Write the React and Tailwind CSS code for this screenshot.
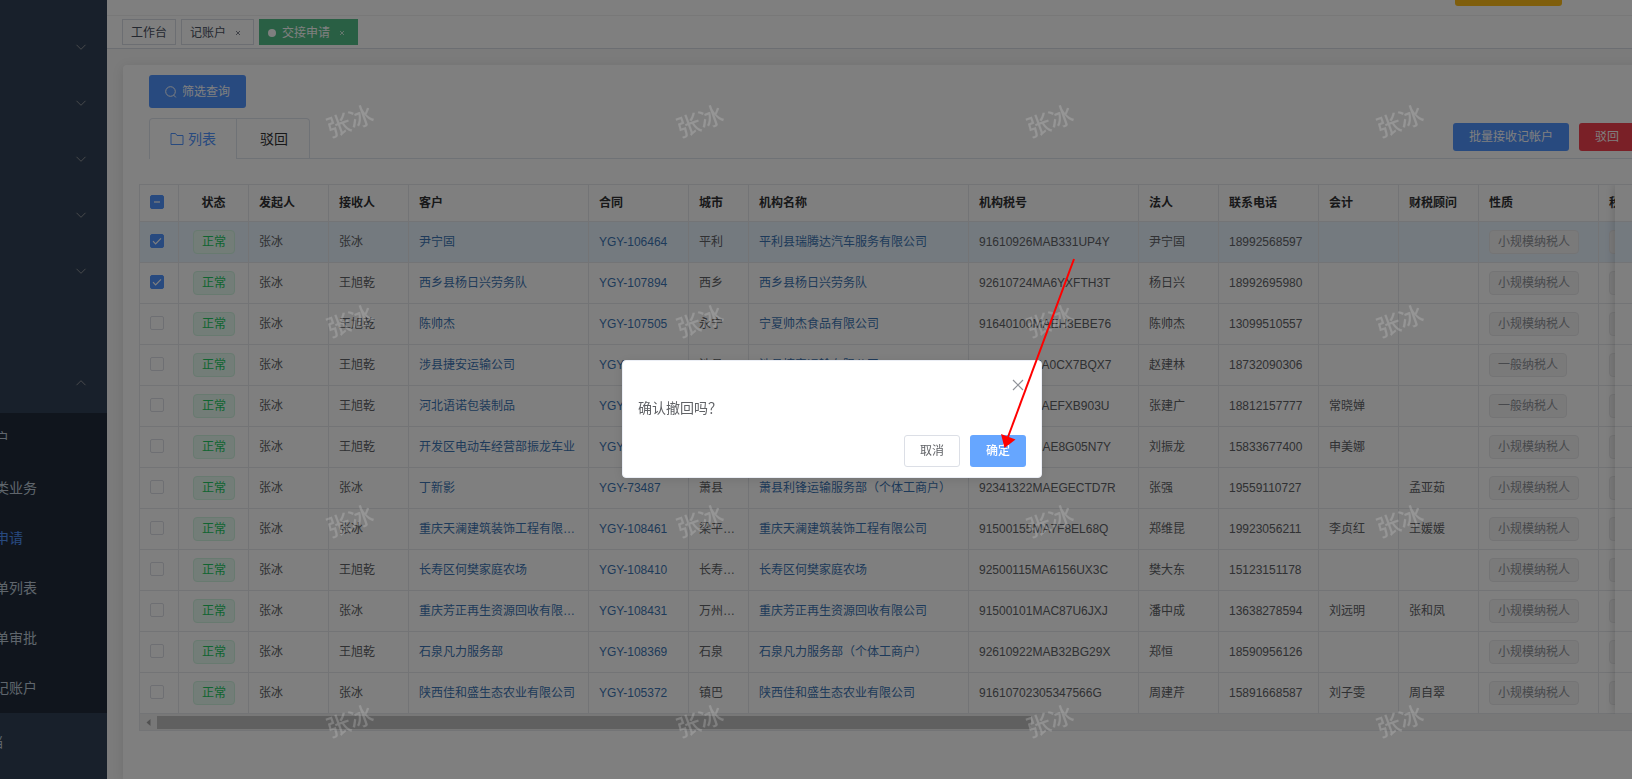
import React, { useState } from "react";

const menuItems = ["down", "down", "down", "down", "down", "", "up"];

const subMenu = ["户", "类业务", "申请", "单列表", "单审批", "记账户"];

const columns = [
  { title: "状态", width: "w-[70px]" },
  { title: "发起人", width: "w-[80px]" },
  { title: "接收人", width: "w-[80px]" },
  { title: "客户", width: "w-[180px]" },
  { title: "合同", width: "w-[100px]" },
  { title: "城市", width: "w-[60px]" },
  { title: "机构名称", width: "w-[220px]" },
  { title: "机构税号", width: "w-[170px]" },
  { title: "法人", width: "w-[80px]" },
  { title: "联系电话", width: "w-[100px]" },
  { title: "会计", width: "w-[80px]" },
  { title: "财税顾问", width: "w-[80px]" },
  { title: "性质", width: "w-[120px]" },
  { title: "税种", width: "w-[120px]" },
];

const small = "小规模纳税人";
const general = "一般纳税人";

const initialRows = [
  { checked: true, receiver: "张冰", customer: "尹宁固", contract: "YGY-106464", city: "平利", org: "平利县瑞腾达汽车服务有限公司", taxNo: "91610926MAB331UP4Y", legal: "尹宁固", phone: "18992568597", accountant: "", advisor: "", nature: small },
  { checked: true, receiver: "王旭乾", customer: "西乡县杨日兴劳务队", contract: "YGY-107894", city: "西乡", org: "西乡县杨日兴劳务队", taxNo: "92610724MA6YXFTH3T", legal: "杨日兴", phone: "18992695980", accountant: "", advisor: "", nature: small },
  { checked: false, receiver: "王旭乾", customer: "陈帅杰", contract: "YGY-107505", city: "永宁", org: "宁夏帅杰食品有限公司", taxNo: "91640100MAEH3EBE76", legal: "陈帅杰", phone: "13099510557", accountant: "", advisor: "", nature: small },
  { checked: false, receiver: "王旭乾", customer: "涉县捷安运输公司", contract: "YGY-107312", city: "涉县", org: "涉县捷安运输有限公司", taxNo: "91130426MA0CX7BQX7", legal: "赵建林", phone: "18732090306", accountant: "", advisor: "", nature: general },
  { checked: false, receiver: "王旭乾", customer: "河北语诺包装制品", contract: "YGY-107208", city: "河北", org: "河北语诺包装制品", taxNo: "91130426MAEFXB903U", legal: "张建广", phone: "18812157777", accountant: "常晓婵", advisor: "", nature: general },
  { checked: false, receiver: "王旭乾", customer: "开发区电动车经营部振龙车业", contract: "YGY-107116", city: "开发", org: "开发区电动车经营部", taxNo: "92130426MAE8G05N7Y", legal: "刘振龙", phone: "15833677400", accountant: "申美娜", advisor: "", nature: small },
  { checked: false, receiver: "张冰", customer: "丁新影", contract: "YGY-73487", city: "萧县", org: "萧县利锋运输服务部（个体工商户）", taxNo: "92341322MAEGECTD7R", legal: "张强", phone: "19559110727", accountant: "", advisor: "孟亚茹", nature: small },
  { checked: false, receiver: "张冰", customer: "重庆天澜建筑装饰工程有限公司", contract: "YGY-108461", city: "梁平区县", org: "重庆天澜建筑装饰工程有限公司", taxNo: "91500155MA7F8EL68Q", legal: "郑维昆", phone: "19923056211", accountant: "李贞红", advisor: "王媛媛", nature: small },
  { checked: false, receiver: "王旭乾", customer: "长寿区何樊家庭农场", contract: "YGY-108410", city: "长寿区县", org: "长寿区何樊家庭农场", taxNo: "92500115MA6156UX3C", legal: "樊大东", phone: "15123151178", accountant: "", advisor: "", nature: small },
  { checked: false, receiver: "张冰", customer: "重庆芳正再生资源回收有限公司", contract: "YGY-108431", city: "万州区县", org: "重庆芳正再生资源回收有限公司", taxNo: "91500101MAC87U6JXJ", legal: "潘中成", phone: "13638278594", accountant: "刘远明", advisor: "张和凤", nature: small },
  { checked: false, receiver: "王旭乾", customer: "石泉凡力服务部", contract: "YGY-108369", city: "石泉", org: "石泉凡力服务部（个体工商户）", taxNo: "92610922MAB32BG29X", legal: "郑恒", phone: "18590956126", accountant: "", advisor: "", nature: small },
  { checked: false, receiver: "张冰", customer: "陕西佳和盛生态农业有限公司", contract: "YGY-105372", city: "镇巴", org: "陕西佳和盛生态农业有限公司", taxNo: "91610702305347566G", legal: "周建芹", phone: "15891668587", accountant: "刘子雯", advisor: "周自翠", nature: small },
];

function Chevron({ up }) {
  return (
    <svg
      viewBox="0 0 12 12"
      className={up ? "h-3 w-3 rotate-180" : "h-3 w-3"}
      fill="none"
      stroke="#909399"
      strokeWidth="1"
    >
      <path d="M1.5 3.8 6 8.3l4.5-4.5" />
    </svg>
  );
}

function Sidebar() {
  return (
    <nav className="w-[107px] shrink-0 overflow-hidden bg-[#304156] pt-[21px] text-sm text-[#bfcbd9]">
      {menuItems.map((dir, index) => (
        <div
          key={index}
          className="flex h-14 items-center justify-end pr-5 pb-1"
        >
          {dir && <Chevron up={dir === "up"} />}
        </div>
      ))}
      <div className="bg-[#202b3b]">
        {subMenu.map((label) => (
          <a
            key={label}
            href="#"
            className={`-ml-[5px] flex h-[50px] items-center whitespace-nowrap ${
              label === "申请" ? "text-[#5094ff]" : ""
            }`}
          >
            {label}
          </a>
        ))}
      </div>
      <a href="#" className="-ml-[11px] flex h-14 items-center pt-0.5">
        档
      </a>
    </nav>
  );
}

function TagsBar() {
  return (
    <div className="flex h-[33px] items-center gap-[5px] border-b border-[#d8dce5] bg-white pl-[15px] text-xs text-[#495060]">
      <a
        href="#"
        className="flex h-[26px] items-center border border-[#d8dce5] px-2 pt-0.5"
      >
        工作台
      </a>
      <a
        href="#"
        className="flex h-[26px] items-center gap-2 border border-[#d8dce5] pt-0.5 pr-[11px] pl-2"
      >
        记账户
        <CloseIcon className="h-2 w-2" />
      </a>
      <a
        href="#"
        className="flex h-[26px] items-center border border-[#52bf88] bg-[#52bf88] pt-0.5 pr-[11px] pl-2 text-white"
      >
        <span className="mr-[6px] h-2 w-2 rounded-full bg-white"></span>
        交接申请
        <CloseIcon className="ml-2 h-2 w-2" />
      </a>
    </div>
  );
}

function CloseIcon({ className }) {
  return (
    <svg
      viewBox="0 0 8 8"
      className={className}
      fill="none"
      stroke="currentColor"
      strokeWidth="0.7"
    >
      <path d="M2 2l4 4M6 2l-4 4" />
    </svg>
  );
}

function Checkbox({ checked, partial, onChange, label }) {
  const filled = checked || partial;
  return (
    <label className="grid h-3.5 w-3.5">
      <input
        type="checkbox"
        aria-label={label}
        checked={checked}
        onChange={onChange}
        className={`col-start-1 row-start-1 h-3.5 w-3.5 appearance-none rounded-xs border ${
          filled ? "border-[#5094ff] bg-[#5094ff]" : "border-[#dcdfe6] bg-white"
        }`}
      />
      {filled && (
        <svg
          viewBox="0 0 14 14"
          className="pointer-events-none col-start-1 row-start-1 h-3.5 w-3.5"
          fill="none"
          stroke="white"
        >
          {partial ? (
            <path d="M4 7h6" strokeWidth="1.2" />
          ) : (
            <path d="M3 7.2l2.6 2.6L11 4.3" strokeWidth="1.2" />
          )}
        </svg>
      )}
    </label>
  );
}

function Tag({ green, children }) {
  return (
    <span
      className={`inline-flex h-6 items-center rounded-sm border px-2 align-middle ${
        green
          ? "border-[#d0f5e0] bg-[#e7faf0] text-[#22ca62]"
          : "border-[#e9e9eb] bg-[#f4f4f5] text-[#909399]"
      }`}
    >
      {children}
    </span>
  );
}

function Cell({ children, className = "px-2.5" }) {
  return (
    <td
      className={`h-[41px] truncate border-r border-b border-[#e6e8ec] py-0 ${className}`}
    >
      {children}
    </td>
  );
}

function DataTable() {
  const [rows, setRows] = useState(initialRows);

  const toggle = (index) => {
    setRows(
      rows.map((row, i) =>
        i === index ? { ...row, checked: !row.checked } : row
      )
    );
  };

  return (
    <div className="mt-[25px] ml-4 border-t border-l border-[#e6e8ec] text-xs text-[#606266]">
      <div className="relative overflow-hidden">
        <table className="w-[1579px] table-fixed border-separate border-spacing-0">
          <thead>
            <tr className="text-left text-[#303133]">
              <th className="h-[37px] w-[39px] border-r border-b border-[#e6e8ec] px-2.5 py-0 pb-0.5">
                <Checkbox
                  checked={false}
                  partial
                  onChange={() => {}}
                  label="全选"
                />
              </th>
              {columns.map((col) => (
                <th
                  key={col.title}
                  className={`border-r border-b border-[#e6e8ec] px-2.5 py-0 font-bold whitespace-nowrap ${
                    col.width
                  } ${col.title === "状态" ? "text-center" : ""}`}
                >
                  {col.title}
                </th>
              ))}
            </tr>
          </thead>
          <tbody>
            {rows.map((row, index) => (
              <tr key={row.contract} className={index === 0 ? "bg-[#e8f4ff]" : ""}>
                <Cell className="px-2.5 pb-0.5">
                  <Checkbox
                    checked={row.checked}
                    onChange={() => toggle(index)}
                    label={row.customer}
                  />
                </Cell>
                <Cell className="pr-[9px] pl-2.5 text-center">
                  <Tag green>正常</Tag>
                </Cell>
                <Cell>张冰</Cell>
                <Cell>{row.receiver}</Cell>
                <Cell className="px-2.5 text-[#3c75b4]">
                  <a href="#">{row.customer}</a>
                </Cell>
                <Cell className="px-2.5 text-[#3c75b4]">
                  <a href="#">{row.contract}</a>
                </Cell>
                <Cell>{row.city}</Cell>
                <Cell className="px-2.5 text-[#3c75b4]">
                  <a href="#">{row.org}</a>
                </Cell>
                <Cell>{row.taxNo}</Cell>
                <Cell>{row.legal}</Cell>
                <Cell>{row.phone}</Cell>
                <Cell>{row.accountant}</Cell>
                <Cell>{row.advisor}</Cell>
                <Cell>
                  <Tag>{row.nature}</Tag>
                </Cell>
                <Cell>
                  <Tag>增值税</Tag>
                </Cell>
              </tr>
            ))}
          </tbody>
        </table>
        {/* fixed right column */}
        <div className="absolute inset-y-0 right-0 w-[49px] bg-white shadow-[0_0_10px_rgba(0,0,0,0.2)]">
          <div className="h-[37px] border-b border-[#e6e8ec]"></div>
          {rows.map((row, index) => (
            <div
              key={row.contract}
              className={`h-[41px] border-b border-[#e6e8ec] ${
                index === 0 ? "bg-[#e8f4ff]" : ""
              }`}
            ></div>
          ))}
        </div>
      </div>
      <div className="flex h-[17px] items-center border-b border-[#e6e8ec] bg-[#f1f1f1]">
        <svg viewBox="0 0 17 17" className="h-[17px] w-[17px]" fill="#a3a3a3">
          <path d="M10.5 5v7L6.5 8.5z" />
        </svg>
        <div className="h-[13px] w-[874px] bg-[#c1c1c1]"></div>
      </div>
    </div>
  );
}

function Watermark() {
  return (
    <div className="pointer-events-none fixed top-[22px] left-[175px] z-20 grid grid-cols-[repeat(4,350px)] auto-rows-[200px]">
      {Array.from({ length: 16 }).map((_, index) => (
        <div
          key={index}
          className="flex items-center justify-center text-2xl font-medium text-[#c8c8c8]/30"
        >
          <span className="-rotate-20">张冰</span>
        </div>
      ))}
    </div>
  );
}

function ConfirmDialog() {
  return (
    <div className="fixed top-0 -right-8 -bottom-[59px] left-0 z-30 flex items-center justify-center">
      <div
        role="dialog"
        className="w-[420px] rounded-sm border border-[#ebeef5] bg-white pb-2.5 shadow-[0_2px_12px_rgba(0,0,0,0.1)]"
      >
        <div className="flex justify-end pt-4 pr-[15px]">
          <button type="button" aria-label="关闭" className="text-[#909399]">
            <svg
              viewBox="0 0 16 16"
              className="h-4 w-4"
              fill="none"
              stroke="currentColor"
              strokeWidth="1.2"
            >
              <path d="M3 3l10 10M13 3L3 13" />
            </svg>
          </button>
        </div>
        <p className="px-[15px] pt-[3px] text-sm leading-6 text-[#606266]">
          确认撤回吗？
        </p>
        <div className="flex justify-end gap-2.5 pt-[15px] pr-[15px] text-xs">
          <button
            type="button"
            className="h-8 w-14 rounded-[3px] border border-[#dcdfe6] bg-white text-[#606266]"
          >
            取消
          </button>
          <button
            type="button"
            className="h-8 w-14 rounded-[3px] bg-[#66a6ff] font-medium text-white"
          >
            确定
          </button>
        </div>
      </div>
    </div>
  );
}

function Pointer() {
  return (
    <svg
      viewBox="0 0 80 195"
      className="pointer-events-none fixed top-[255px] left-[998px] z-40 h-[195px] w-20"
    >
      <path d="M76 4 10 182" stroke="#ff0000" strokeWidth="2" />
      <path d="M3 179l14.500 5.500L6.500 193z" fill="#ff0000" />
    </svg>
  );
}

function App() {
  return (
    <div className="flex h-screen overflow-hidden bg-[#f6f6f6] font-['Liberation_Sans','Noto_Sans_CJK_SC',sans-serif]">
      <Sidebar />
      <main className="-mr-8 flex min-w-0 flex-1 flex-col">
        <header className="flex h-4 shrink-0 items-start justify-end border-b border-[#f0f0f0] bg-white pr-[102px]">
          <div className="h-1.5 w-[107px] rounded-b-[3px] bg-[#ffbd18]"></div>
        </header>
        <TagsBar />
        <section className="mt-4 ml-4 flex-1 rounded-tl-sm bg-white pt-2.5 shadow-[0_2px_12px_rgba(0,0,0,0.1)]">
          <div className="pl-[26px]">
            <button
              type="button"
              className="flex h-[33px] items-center gap-[5px] rounded-[3px] bg-[#5094ff] px-4 text-xs text-white"
            >
              <svg
                viewBox="0 0 12 12"
                className="h-3 w-3"
                fill="none"
                stroke="currentColor"
              >
                <circle cx="5.500" cy="5.500" r="4.800" />
                <path d="M8.800 9.200l2 2.200" />
              </svg>
              筛选查询
            </button>
            <div className="mt-2.5 flex items-end">
              <div className="flex h-[41px] rounded-t-sm border-x border-t border-[#dfe4ed] text-sm">
                <button
                  type="button"
                  className="flex items-center gap-1 px-5 text-[#5094ff]"
                >
                  <svg
                    viewBox="0 0 14 14"
                    className="h-3.5 w-3.5"
                    fill="none"
                    stroke="currentColor"
                  >
                    <path d="M1 1.500h4.500l1.500 2h6v9H1z" />
                  </svg>
                  列表
                </button>
                <button
                  type="button"
                  className="border-b border-l border-[#dfe4ed] pr-[21px] pl-[23px] text-[#303133]"
                >
                  驳回
                </button>
              </div>
              <div className="flex h-[41px] flex-1 items-start justify-end gap-2.5 border-b border-[#dfe4ed] pt-[5px] pr-[29px] text-xs text-white">
                <button
                  type="button"
                  className="h-7 rounded-[3px] bg-[#5094ff] px-4"
                >
                  批量接收记帐户
                </button>
                <button
                  type="button"
                  className="h-7 rounded-[3px] bg-[#f5404f] px-4"
                >
                  驳回
                </button>
              </div>
            </div>
          </div>
          <DataTable />
        </section>
      </main>
      <div className="fixed inset-0 z-10 bg-black/50"></div>
      <Watermark />
      <ConfirmDialog />
      <Pointer />
    </div>
  );
}

export default App;
